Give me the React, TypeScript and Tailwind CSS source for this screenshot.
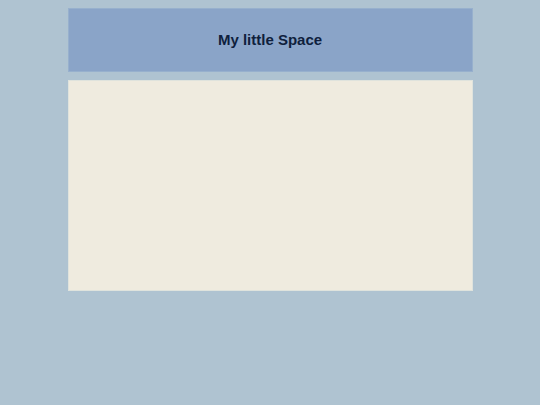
export default function App() {
  return (
    <div className="min-h-[405px] w-full bg-[#afc3d1] pt-2" style={{ fontFamily: '"Liberation Sans", Arial, sans-serif' }}>
      <div className="mx-auto w-[405px] flex flex-col gap-2">
        <div className="h-[64px] bg-[#8aa4c8] border border-[#97b0cd] flex items-center justify-center">
          <h1 className="text-[15px] font-bold text-[#0f1f3d]">My little Space</h1>
        </div>
        <div className="h-[211px] bg-[#efebdf] border border-[#dfe3dd]"></div>
      </div>
    </div>
  );
}
